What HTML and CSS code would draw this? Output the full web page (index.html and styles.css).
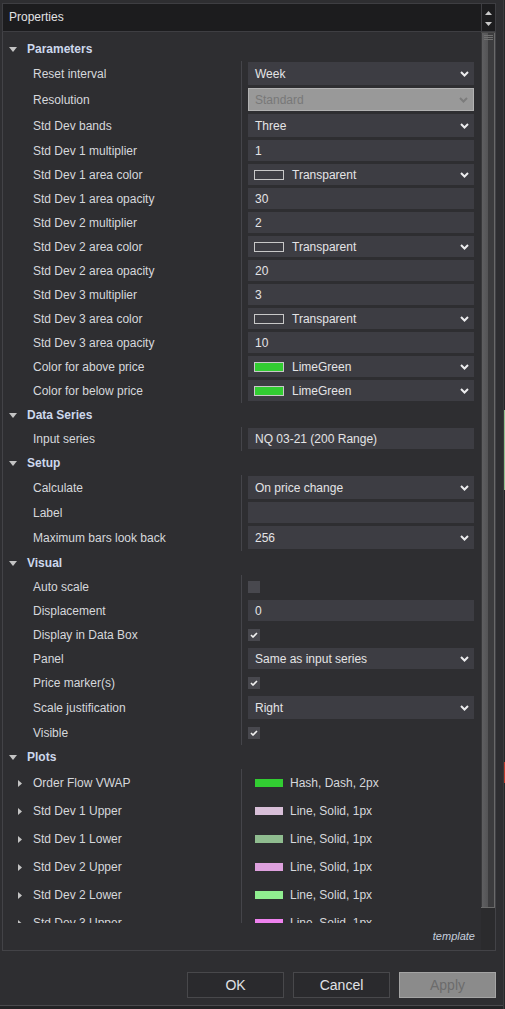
FILE: index.html
```html
<html>
<head>
  <meta charset="utf-8">
  <title>Properties</title>
  <link rel="stylesheet" href="styles.css">
</head>

<body>
  <div class="window">
    <div class="dialog">
      <div class="titlebar">
        <span class="title">Properties</span>
        <div class="spin">
          <svg width="7" height="4" viewBox="0 0 7 4"><polygon points="0,4 3.5,0 7,4" fill="#c8c8c8"/></svg>
          <svg width="7" height="4" viewBox="0 0 7 4"><polygon points="0,0 3.5,4 7,0" fill="#c8c8c8"/></svg>
        </div>
      </div>

      <div class="panel">
        <div class="main">
          <div class="viewport">
            <div class="grid">

              <div class="cat">
                <svg width="8" height="5" viewBox="0 0 8 5"><polygon points="0,0 8,0 4,5" fill="#c4c4c4"/></svg>
                Parameters
              </div>
              <div class="group">
                <div class="row tall">
                  <div class="name">Reset interval</div>
                  <div class="value"><div class="box combo">Week<svg class="chev" width="9" height="6" viewBox="0 0 9 6"><polyline points="1,1 4.5,4.5 8,1"/></svg></div></div>
                </div>
                <div class="row tall">
                  <div class="name">Resolution</div>
                  <div class="value"><div class="box combo disabled">Standard<svg class="chev" width="9" height="6" viewBox="0 0 9 6"><polyline points="1,1 4.5,4.5 8,1"/></svg></div></div>
                </div>
                <div class="row tall">
                  <div class="name">Std Dev bands</div>
                  <div class="value"><div class="box combo">Three<svg class="chev" width="9" height="6" viewBox="0 0 9 6"><polyline points="1,1 4.5,4.5 8,1"/></svg></div></div>
                </div>
                <div class="row">
                  <div class="name">Std Dev 1 multiplier</div>
                  <div class="value"><div class="box">1</div></div>
                </div>
                <div class="row">
                  <div class="name">Std Dev 1 area color</div>
                  <div class="value"><div class="box combo color"><span class="swatch"></span>Transparent<svg class="chev" width="9" height="6" viewBox="0 0 9 6"><polyline points="1,1 4.5,4.5 8,1"/></svg></div></div>
                </div>
                <div class="row">
                  <div class="name">Std Dev 1 area opacity</div>
                  <div class="value"><div class="box">30</div></div>
                </div>
                <div class="row">
                  <div class="name">Std Dev 2 multiplier</div>
                  <div class="value"><div class="box">2</div></div>
                </div>
                <div class="row">
                  <div class="name">Std Dev 2 area color</div>
                  <div class="value"><div class="box combo color"><span class="swatch"></span>Transparent<svg class="chev" width="9" height="6" viewBox="0 0 9 6"><polyline points="1,1 4.5,4.5 8,1"/></svg></div></div>
                </div>
                <div class="row">
                  <div class="name">Std Dev 2 area opacity</div>
                  <div class="value"><div class="box">20</div></div>
                </div>
                <div class="row">
                  <div class="name">Std Dev 3 multiplier</div>
                  <div class="value"><div class="box">3</div></div>
                </div>
                <div class="row">
                  <div class="name">Std Dev 3 area color</div>
                  <div class="value"><div class="box combo color"><span class="swatch"></span>Transparent<svg class="chev" width="9" height="6" viewBox="0 0 9 6"><polyline points="1,1 4.5,4.5 8,1"/></svg></div></div>
                </div>
                <div class="row">
                  <div class="name">Std Dev 3 area opacity</div>
                  <div class="value"><div class="box">10</div></div>
                </div>
                <div class="row">
                  <div class="name">Color for above price</div>
                  <div class="value"><div class="box combo color"><span class="swatch lime"></span>LimeGreen<svg class="chev" width="9" height="6" viewBox="0 0 9 6"><polyline points="1,1 4.5,4.5 8,1"/></svg></div></div>
                </div>
                <div class="row">
                  <div class="name">Color for below price</div>
                  <div class="value"><div class="box combo color"><span class="swatch lime"></span>LimeGreen<svg class="chev" width="9" height="6" viewBox="0 0 9 6"><polyline points="1,1 4.5,4.5 8,1"/></svg></div></div>
                </div>
              </div>

              <div class="cat">
                <svg width="8" height="5" viewBox="0 0 8 5"><polygon points="0,0 8,0 4,5" fill="#c4c4c4"/></svg>
                Data Series
              </div>
              <div class="group">
                <div class="row">
                  <div class="name">Input series</div>
                  <div class="value"><div class="box">NQ 03-21 (200 Range)</div></div>
                </div>
              </div>

              <div class="cat">
                <svg width="8" height="5" viewBox="0 0 8 5"><polygon points="0,0 8,0 4,5" fill="#c4c4c4"/></svg>
                Setup
              </div>
              <div class="group">
                <div class="row tall">
                  <div class="name">Calculate</div>
                  <div class="value"><div class="box combo">On price change<svg class="chev" width="9" height="6" viewBox="0 0 9 6"><polyline points="1,1 4.5,4.5 8,1"/></svg></div></div>
                </div>
                <div class="row">
                  <div class="name">Label</div>
                  <div class="value"><div class="box"></div></div>
                </div>
                <div class="row tall">
                  <div class="name">Maximum bars look back</div>
                  <div class="value"><div class="box combo">256<svg class="chev" width="9" height="6" viewBox="0 0 9 6"><polyline points="1,1 4.5,4.5 8,1"/></svg></div></div>
                </div>
              </div>

              <div class="cat">
                <svg width="8" height="5" viewBox="0 0 8 5"><polygon points="0,0 8,0 4,5" fill="#c4c4c4"/></svg>
                Visual
              </div>
              <div class="group">
                <div class="row">
                  <div class="name">Auto scale</div>
                  <div class="value"><span class="check"></span></div>
                </div>
                <div class="row">
                  <div class="name">Displacement</div>
                  <div class="value"><div class="box">0</div></div>
                </div>
                <div class="row">
                  <div class="name">Display in Data Box</div>
                  <div class="value"><span class="check"><svg width="8" height="6" viewBox="0 0 8 6"><polyline points="1,3 3,5 7,1"/></svg></span></div>
                </div>
                <div class="row">
                  <div class="name">Panel</div>
                  <div class="value"><div class="box combo">Same as input series<svg class="chev" width="9" height="6" viewBox="0 0 9 6"><polyline points="1,1 4.5,4.5 8,1"/></svg></div></div>
                </div>
                <div class="row">
                  <div class="name">Price marker(s)</div>
                  <div class="value"><span class="check"><svg width="8" height="6" viewBox="0 0 8 6"><polyline points="1,3 3,5 7,1"/></svg></span></div>
                </div>
                <div class="row tall">
                  <div class="name">Scale justification</div>
                  <div class="value"><div class="box combo">Right<svg class="chev" width="9" height="6" viewBox="0 0 9 6"><polyline points="1,1 4.5,4.5 8,1"/></svg></div></div>
                </div>
                <div class="row">
                  <div class="name">Visible</div>
                  <div class="value"><span class="check"><svg width="8" height="6" viewBox="0 0 8 6"><polyline points="1,3 3,5 7,1"/></svg></span></div>
                </div>
              </div>

              <div class="cat">
                <svg width="8" height="5" viewBox="0 0 8 5"><polygon points="0,0 8,0 4,5" fill="#c4c4c4"/></svg>
                Plots
              </div>
              <div class="group">
                <div class="row plot">
                  <div class="name"><svg width="4" height="7" viewBox="0 0 4 7"><polygon points="0,0 4,3.5 0,7" fill="#c4c4c4"/></svg>Order Flow VWAP</div>
                  <div class="value"><span class="line-swatch" style="background:#32cd32"></span>Hash, Dash, 2px</div>
                </div>
                <div class="row plot">
                  <div class="name"><svg width="4" height="7" viewBox="0 0 4 7"><polygon points="0,0 4,3.5 0,7" fill="#c4c4c4"/></svg>Std Dev 1 Upper</div>
                  <div class="value"><span class="line-swatch" style="background:#d8bfd8"></span>Line, Solid, 1px</div>
                </div>
                <div class="row plot">
                  <div class="name"><svg width="4" height="7" viewBox="0 0 4 7"><polygon points="0,0 4,3.5 0,7" fill="#c4c4c4"/></svg>Std Dev 1 Lower</div>
                  <div class="value"><span class="line-swatch" style="background:#8fbc8f"></span>Line, Solid, 1px</div>
                </div>
                <div class="row plot">
                  <div class="name"><svg width="4" height="7" viewBox="0 0 4 7"><polygon points="0,0 4,3.5 0,7" fill="#c4c4c4"/></svg>Std Dev 2 Upper</div>
                  <div class="value"><span class="line-swatch" style="background:#dda0dd"></span>Line, Solid, 1px</div>
                </div>
                <div class="row plot">
                  <div class="name"><svg width="4" height="7" viewBox="0 0 4 7"><polygon points="0,0 4,3.5 0,7" fill="#c4c4c4"/></svg>Std Dev 2 Lower</div>
                  <div class="value"><span class="line-swatch" style="background:#90ee90"></span>Line, Solid, 1px</div>
                </div>
                <div class="row plot">
                  <div class="name"><svg width="4" height="7" viewBox="0 0 4 7"><polygon points="0,0 4,3.5 0,7" fill="#c4c4c4"/></svg>Std Dev 3 Upper</div>
                  <div class="value"><span class="line-swatch" style="background:#ee82ee"></span>Line, Solid, 1px</div>
                </div>
              </div>

            </div>
          </div>
          <div class="footer">template</div>
        </div>
        <div class="scrollbar"><div class="thumb"></div></div>
      </div>

      <div class="buttons">
        <div class="btn">OK</div>
        <div class="btn">Cancel</div>
        <div class="btn apply">Apply</div>
      </div>
    </div>

    <div class="side">
      <div class="mark green"></div>
      <div class="mark red"></div>
    </div>
  </div>
</body>

</html>
```

FILE: styles.css
```css
* {
  box-sizing: border-box;
}

body {
  margin: 0;
  background: #232325;
  font-family: "Liberation Sans", Arial, sans-serif;
  font-size: 12px;
  color: #d8d8da;
}

.window {
  display: flex;
  height: 1009px;
  overflow: hidden;
}

.dialog {
  width: 503px;
  height: 1006px;
  padding: 3px 7px 0 2px;
  background: #2e2e31;
  border-bottom: 1px solid #4a4a4d;
  display: flex;
  flex-direction: column;
}

.titlebar {
  height: 29px;
  display: flex;
  background: #1c1c1e;
  border: 1px solid #3e3e42;
}

.title {
  flex: 1;
  padding-left: 6px;
  line-height: 27px;
  color: #e2e2e4;
}

.spin {
  width: 14px;
  border-left: 1px solid #3e3e42;
  display: flex;
  flex-direction: column;
  align-items: center;
  justify-content: space-around;
  padding: 3px 0 2px;
}

.panel {
  height: 919px;
  display: flex;
  border: 1px solid #434347;
  border-top: none;
}

.main {
  width: 478px;
  display: flex;
  flex-direction: column;
}

.viewport {
  height: 891px;
  overflow: hidden;
}

.grid {
  padding-top: 5px;
}

.cat {
  height: 24px;
  display: flex;
  align-items: center;
  padding-left: 6px;
  font-weight: bold;
  color: #cdd8ec;
}

.cat svg {
  margin-right: 10px;
}

.row {
  display: flex;
  height: 24px;
}

.row.tall {
  height: 26px;
}

.row.plot {
  height: 28px;
}

.name {
  width: 239px;
  padding-left: 30px;
  border-right: 1px solid #45454a;
  display: flex;
  align-items: center;
  color: #d6d8dc;
}

.plot .name {
  padding-left: 15px;
}

.plot .name svg {
  margin-right: 11px;
}

.value {
  width: 239px;
  padding: 1px 7px 0 6px;
}

.plot .value {
  padding: 0 0 0 13px;
  display: flex;
  align-items: center;
  color: #d6d8dc;
}

.box {
  height: 21px;
  background: #3d3d43;
  display: flex;
  align-items: center;
  padding: 0 5px 0 7px;
  color: #e4e4e6;
}

.tall .box {
  height: 23px;
}

.combo {
  justify-content: space-between;
}

.combo.color {
  justify-content: flex-start;
  padding-left: 6px;
}

.combo.color .chev {
  margin-left: auto;
}

.chev polyline {
  fill: none;
  stroke: #ececee;
  stroke-width: 2;
}

.box.disabled {
  background: #999999;
  border: 1px solid #b2b2b2;
  color: #787878;
  padding-left: 6px;
}

.box.disabled .chev polyline {
  stroke: #7c7c7c;
}

.swatch {
  width: 30px;
  height: 10px;
  border: 1px solid #c8c8c8;
  margin-right: 8px;
}

.swatch.lime {
  background: #32cd32;
}

.line-swatch {
  width: 28px;
  height: 8px;
  margin-right: 7px;
}

.check {
  display: flex;
  align-items: center;
  justify-content: center;
  width: 12px;
  height: 12px;
  margin-top: 5px;
  background: #48484e;
}

.check polyline {
  fill: none;
  stroke: #f0f0f0;
  stroke-width: 1.6;
}

.footer {
  flex: 1;
  text-align: right;
  padding-right: 6px;
  line-height: 27px;
  font-size: 11px;
  font-style: italic;
  color: #c6cedd;
}

.scrollbar {
  width: 14px;
  background: #2b2b2d;
}

.thumb {
  height: 876px;
  border-top: 1px solid #4a4a4a;
  border-bottom: 1px solid #6a6a6a;
  background:
    linear-gradient(#707070, #707070) 3px 2px / 9px 1px no-repeat,
    linear-gradient(#707070, #707070) 3px 4px / 9px 1px no-repeat,
    linear-gradient(#707070, #707070) 3px 6px / 9px 1px no-repeat,
    linear-gradient(to right, #3a3a3c 0, #3a3a3c 1px, #5f5f61 1px, #545456 7px, #3c3c3e 7px, #3c3c3e 13px, #6a6a6a 13px);
}

.buttons {
  display: flex;
  justify-content: flex-end;
  gap: 9px;
  margin-top: 21px;
}

.btn {
  width: 97px;
  height: 26px;
  line-height: 24px;
  text-align: center;
  font-size: 14px;
  color: #e0e2e6;
  background: #2a2a2d;
  border: 1px solid #48484b;
}

.btn.apply {
  background: #8b8b8b;
  border-color: #a4a4a4;
  color: #6c6c6c;
}

.side {
  flex: 1;
  background: #262628;
  border-left: 1px solid #3c3c3e;
}

.mark {
  height: 80px;
  margin-top: 410px;
  background: #8fbf8f;
}

.mark.red {
  height: 21px;
  margin-top: 272px;
  background: #c0392b;
}
```
